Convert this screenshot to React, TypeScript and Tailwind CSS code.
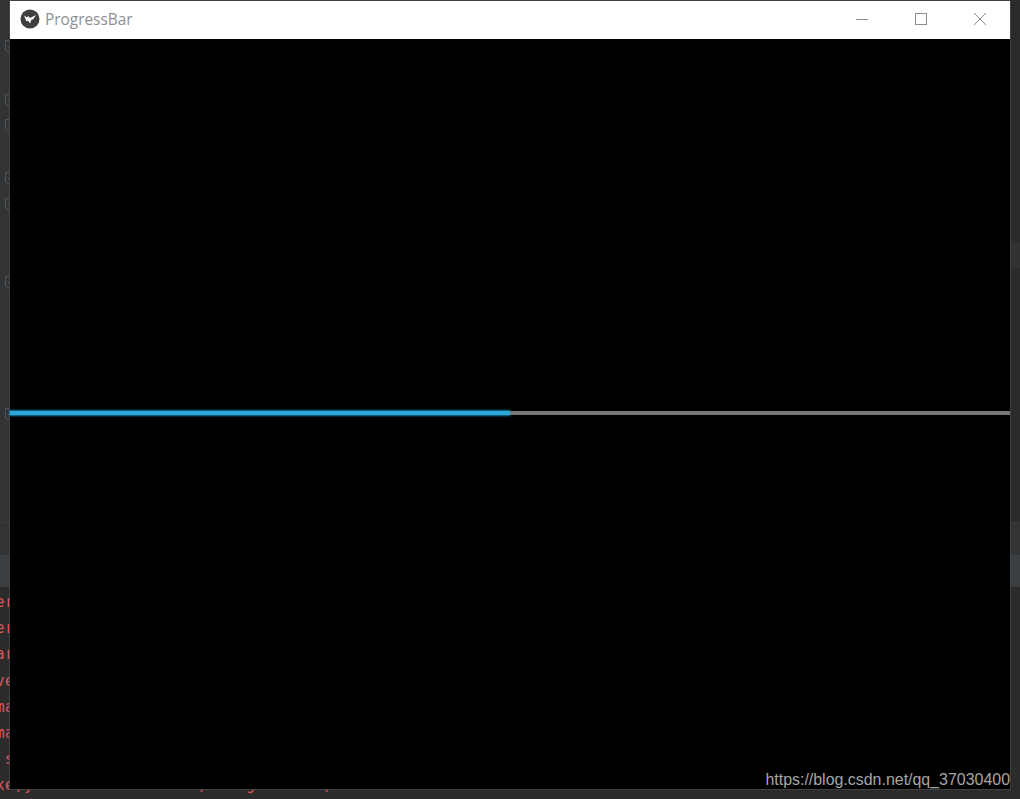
const consoleLines = [
  "er: OpenGL renderer",
  "er: OpenGL version",
  "ar: available providers",
  "ve: virtual keyboard",
  "ma: multitouch manager",
  "ma: main loop manager",
  " s: Start application",
  "xe,ycurr: Not desired, target mode, not needed",
];

const gutterMarks = [46, 100, 125, 178, 204, 282, 414];

function Fold({ top }: { top: number }) {
  return (
    <svg className="absolute left-[5px]" style={{ top: top - 6 }} width="5" height="13" viewBox="0 0 5 13" fill="none" stroke="#525557">
      <path d="M5 0.5H0.5V10L5 12.5" />
      <path d="M3 6.5H5" />
    </svg>
  );
}

function KivyLogo() {
  return (
    <svg width="20" height="20" viewBox="0 0 20 20" className="shrink-0">
      <circle cx="10" cy="10" r="9.5" fill="#3f3f3f" />
      <path d="M4 6.5 L7 8.5 L8 7 L10 9 L16 6 L13 10.5 L11.5 10.5 L10 14.5 L8 11.5 L6.5 12.5 Z" fill="#ffffff" />
    </svg>
  );
}

export default function App() {
  return (
    <div className="relative h-[799px] w-[1020px] overflow-hidden bg-[#2b2b2b]">
      <div className="flex h-full flex-col">
        <div className="flex h-[522px] shrink-0">
          <div className="relative w-[10px] shrink-0 bg-[#313335]">
            {gutterMarks.map((t) => (
              <Fold key={t} top={t} />
            ))}
          </div>
          <div className="flex flex-1 flex-col pt-[243px]">
            <div className="h-[25px] bg-[#323232]" />
          </div>
        </div>
        <div className="h-[33px] shrink-0 border-t border-[#3a3c3e] bg-[#313335]" />
        <div className="h-[32px] shrink-0 bg-[#3c3f41]" />
        <div className="ml-[-5px] flex flex-col pt-[2px] font-['DejaVu_Sans_Mono',monospace] text-[16px] leading-[26.2px] text-[#d9565a]">
          {consoleLines.map((l, i) => (
            <div key={i} className="h-[26.2px] whitespace-pre">
              {l}
            </div>
          ))}
        </div>
      </div>

      <div className="absolute left-[9px] top-0 flex h-[790px] w-[1002px] flex-col border border-[#3f4143]">
        <div className="flex h-[38px] shrink-0 items-center bg-white pb-[2px] pl-[10px]">
          <KivyLogo />
          <span className="ml-[5px] pt-[2px] font-['Open_Sans',sans-serif] text-[15.4px] text-[#8f8f8f]">ProgressBar</span>
          <div className="ml-auto flex items-center pr-[1px]">
            <div className="flex h-[36px] w-[59px] items-center justify-center">
              <div className="h-px w-[12px] bg-[#8c8c8c]" />
            </div>
            <div className="flex h-[36px] w-[59px] items-center justify-center">
              <div className="h-[12px] w-[12px] border border-[#8c8c8c]" />
            </div>
            <div className="flex h-[36px] w-[59px] items-center justify-center">
              <svg width="14" height="14" viewBox="0 0 14 14" stroke="#8c8c8c" strokeWidth="1">
                <path d="M1 1L13 13M13 1L1 13" />
              </svg>
            </div>
          </div>
        </div>
        <div className="relative flex min-h-0 flex-1 flex-col bg-black">
          <div className="h-[372px] shrink-0" />
          <div className="flex h-[4px] w-full">
            <div className="h-[4px] w-[500px] rounded-r-[1px] bg-[#2ca9da] shadow-[0_0_2px_1px_#1e7ba3]" />
            <div className="h-[4px] flex-1 bg-[#767676]" />
          </div>
          <span className="absolute bottom-0 right-0 font-['Liberation_Sans',sans-serif] text-[15.95px] leading-[19px] text-[#a6a6a6]">
            https://blog.csdn.net/qq_37030400
          </span>
        </div>
      </div>
    </div>
  );
}
